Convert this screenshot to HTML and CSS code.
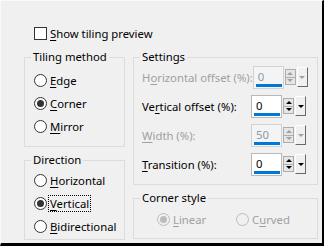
FILE: index.html
```html
<!DOCTYPE html>
<html>
<head>
<meta charset="utf-8">
<link rel="stylesheet" href="styles.css">
</head>
<body>
<div class="dialog">
  <div class="check-row"><span class="checkbox"></span><span><u>S</u>how tiling preview</span></div>
  <div class="columns">
    <div class="col">
      <fieldset class="group tiling">
        <legend>Tiling method</legend>
        <div class="radio"><span class="circle"></span><span><u>E</u>dge</span></div>
        <div class="radio"><span class="circle on"></span><span><u>C</u>orner</span></div>
        <div class="radio"><span class="circle"></span><span><u>M</u>irror</span></div>
      </fieldset>
      <fieldset class="group direction">
        <legend>Direction</legend>
        <div class="radio"><span class="circle"></span><span><u>H</u>orizontal</span></div>
        <div class="radio"><span class="circle on"></span><span class="focus"><u>V</u>ertical</span></div>
        <div class="radio"><span class="circle"></span><span><u>B</u>idirectional</span></div>
      </fieldset>
    </div>
    <div class="col">
      <fieldset class="group settings">
        <legend>Settings</legend>
        <div class="row disabled">
          <span class="lbl">H<u>o</u>rizontal offset (%):</span>
          <div class="spin"><div class="edit"><span class="val">0</span><span class="bar"></span></div><div class="updown"><span class="up"></span><span class="down"></span></div><div class="drop"><span class="tri"></span></div></div>
        </div>
        <div class="row">
          <span class="lbl">Ve<u>r</u>tical offset (%):</span>
          <div class="spin"><div class="edit"><span class="val">0</span><span class="bar"></span></div><div class="updown"><span class="up"></span><span class="down"></span></div><div class="drop"><span class="tri"></span></div></div>
        </div>
        <div class="row disabled">
          <span class="lbl"><u>W</u>idth (%):</span>
          <div class="spin"><div class="edit"><span class="val">50</span><span class="bar"></span></div><div class="updown"><span class="up"></span><span class="down"></span></div><div class="drop"><span class="tri"></span></div></div>
        </div>
        <div class="row">
          <span class="lbl"><u>T</u>ransition (%):</span>
          <div class="spin"><div class="edit"><span class="val">0</span><span class="bar"></span></div><div class="updown"><span class="up"></span><span class="down"></span></div><div class="drop"><span class="tri"></span></div></div>
        </div>
      </fieldset>
      <fieldset class="group corner">
        <legend>Corner style</legend>
        <div class="corner-row">
          <div class="radio dis"><span class="circle on"></span><span><u>L</u>inear</span></div>
          <div class="radio dis"><span class="circle"></span><span>C<u>u</u>rved</span></div>
        </div>
      </fieldset>
    </div>
  </div>
</div>
</body>
</html>
```
FILE: styles.css
```css
* { box-sizing: border-box; }
html, body { margin: 0; padding: 0; }
body {
  background: #f0f0f0;
  font-family: "Noto Sans", "Open Sans", sans-serif;
  font-size: 11.3px;
  color: #000;
}
u { text-decoration: underline; text-underline-offset: 2px; }
.dialog {
  width: 324px;
  height: 246px;
  border-top: 1px solid #fafafa;
  border-left: 1px solid #fafafa;
  border-right: 2px solid #000;
  border-bottom: 3px solid #000;
  padding: 25px 0 0 23px;
}
.check-row {
  display: flex;
  align-items: center;
  gap: 3px;
  height: 15px;
  margin-left: 10px;
  line-height: 15px;
}
.checkbox {
  width: 13px;
  height: 13px;
  border: 1px solid #333;
  background: #fff;
}
.columns {
  display: grid;
  grid-template-columns: 101px 185px;
  column-gap: 8px;
  margin-top: 9px;
}
.col { display: flex; flex-direction: column; gap: 6px; }
.group {
  margin: 0;
  min-width: 0;
  border: 1px solid #dcdcdc;
  padding: 0 8px;
}
.group legend {
  padding: 0 2px;
  line-height: 14px;
  height: 14px;
}
.tiling, .direction { padding-left: 9px; }
.tiling legend, .direction legend { margin-left: -3px; }
.tiling { padding-top: 5px; padding-bottom: 8px; }
.direction { padding-top: 2px; padding-bottom: 1px; }
.radio {
  display: flex;
  align-items: center;
  gap: 3px;
  height: 23px;
  line-height: 15px;
  white-space: nowrap;
}
.circle {
  width: 13px;
  height: 13px;
  flex: none;
  border: 1px solid #333;
  border-radius: 50%;
  background: #fff;
  display: flex;
  align-items: center;
  justify-content: center;
}
.circle.on::after {
  content: "";
  width: 7px;
  height: 7px;
  border-radius: 50%;
  background: #333;
}
.focus { outline: 1px dotted #000; outline-offset: 0; padding: 0 1px; margin-left: -1px; }
.settings { padding: 1px 11px 8px 8px; }
.settings legend { margin-left: -2px; }
.row {
  display: flex;
  align-items: center;
  justify-content: space-between;
  height: 24px;
  margin-bottom: 5px;
}
.row:last-child { margin-bottom: 0; }
.lbl { white-space: nowrap; }
.disabled .lbl { color: #a0a0a0; }
.spin { display: flex; align-items: center; }
.edit {
  width: 31px;
  height: 23px;
  border: 1px solid #b9b9b9;
  background: #fff;
  display: flex;
  flex-direction: column;
  justify-content: space-between;
  padding: 3px 3px 1px 2px;
}
.val { line-height: 14px; padding-left: 2px; color: #000; }
.bar { height: 3px; width: 26px; background: #0078d7; }
.disabled .edit { background: #f4f4f4; border-color: #d2d2d2; }
.disabled .val { color: #8a9aab; }
.updown {
  width: 11px;
  height: 16px;
  margin-left: 1px;
  display: flex;
  flex-direction: column;
  border: 1px solid #adadad;
  background: #e6e6e6;
}
.updown span {
  flex: 1;
  display: flex;
  align-items: center;
  justify-content: center;
}
.up::after {
  content: "";
  border-left: 3px solid transparent;
  border-right: 3px solid transparent;
  border-bottom: 3px solid #000;
}
.down::after {
  content: "";
  border-left: 3px solid transparent;
  border-right: 3px solid transparent;
  border-top: 3px solid #000;
}
.down { border-top: 1px solid #adadad; }
.disabled .up::after { border-bottom-color: #a0a0a0; }
.disabled .down::after { border-top-color: #a0a0a0; }
.drop {
  width: 11px;
  height: 20px;
  margin-left: 1px;
  border: 1px solid;
  border-color: #fff #696969 #696969 #fff;
  background: #f0f0f0;
  display: flex;
  align-items: center;
  justify-content: center;
}
.tri {
  border-left: 3px solid transparent;
  border-right: 3px solid transparent;
  border-top: 3px solid #000;
}
.disabled .tri { border-top-color: #a0a0a0; }
.corner { padding: 3px 8px 7px 23px; }
.corner legend { margin-left: -17px; }
.corner-row { display: flex; }
.corner-row .radio:first-child { width: 79px; }
.dis { color: #a0a0a0; }
.dis .circle { border-color: #bcbcbc; background: #f0f0f0; }
.dis .circle.on::after { background: #bcbcbc; }
```
